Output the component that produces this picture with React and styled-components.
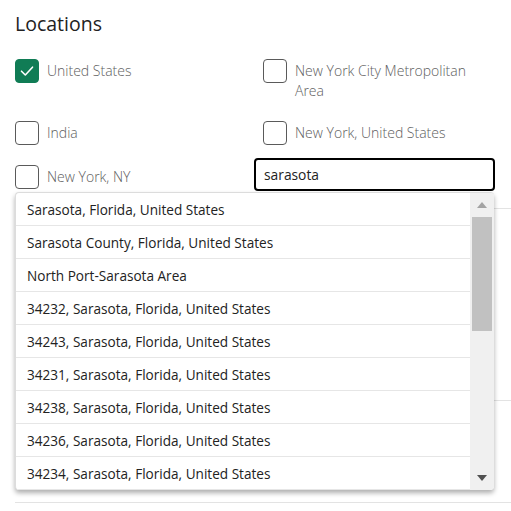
import React from "react";
import styled, { createGlobalStyle } from "styled-components";

const GlobalStyle = createGlobalStyle`
  html, body {
    margin: 0;
    padding: 0;
    background: #ffffff;
    overflow: hidden;
  }
  body {
    font-family: "Open Sans", "Noto Sans", sans-serif;
    color: #222;
  }
  * { box-sizing: border-box; }
`;

const Page = styled.div`
  width: 511px;
  height: 511px;
  padding-left: 15px;
  position: relative;
`;

const Title = styled.h2`
  margin: 0;
  padding-top: 10px;
  font-size: 19.5px;
  font-weight: 400;
  line-height: 28px;
  color: #222;
`;

const Grid = styled.div`
  position: relative;
  display: grid;
  grid-template-columns: 248px 232px;
  row-gap: 20px;
  margin-top: 21px;
  padding-right: 16px;
  align-items: start;
`;

const Option = styled.label`
  display: flex;
  align-items: flex-start;
  gap: 8px;
  font-size: 14px;
  font-weight: 300;
  line-height: 20px;
  color: #5e5e5e;
`;

const Box = styled.span`
  flex: none;
  width: 24px;
  height: 24px;
  border-radius: 4px;
  border: 1px solid ${(p) => (p.$checked ? "#107c55" : "#5a5a5a")};
  background: ${(p) => (p.$checked ? "#107c55" : "#fff")};
  display: flex;
  align-items: center;
  justify-content: center;
`;

const OptionText = styled.span`
  padding-top: 2px;
`;

const SearchInput = styled.input`
  margin: -7px 0 0 -9px;
  width: calc(100% + 9px);
  height: 33px;
  border: 2px solid #000;
  border-radius: 4px;
  padding: 0 8px;
  font: inherit;
  font-size: 13.8px;
  color: #222;
  outline: none;
  background: #fff;
`;

const Dropdown = styled.div`
  position: absolute;
  left: 0;
  top: 133px;
  width: 479px;
  height: 298px;
  display: flex;
  background: #fff;
  border: 1px solid #dcdcdc;
  border-right: none;
  border-bottom: none;
  border-radius: 4px;
  box-shadow: 0 3px 5px rgba(0, 0, 0, 0.32);
  overflow: hidden;
  z-index: 2;
`;

const List = styled.ul`
  list-style: none;
  margin: 0;
  padding: 0;
  flex: 1;
`;

const Item = styled.li`
  height: 33px;
  padding: 0 11px;
  display: flex;
  align-items: center;
  border-bottom: 1px solid #e6e6e6;
  font-size: 13.6px;
  color: #222;
  white-space: nowrap;
`;

const Scrollbar = styled.div`
  flex: none;
  width: 24px;
  background: #f0f0f0;
  display: flex;
  flex-direction: column;
  align-items: center;
`;

const ArrowButton = styled.div`
  height: 24px;
  width: 100%;
  display: flex;
  align-items: center;
  justify-content: center;
`;

const Thumb = styled.div`
  width: 20px;
  height: 114px;
  background: #c1c1c1;
`;

const Track = styled.div`
  flex: 1;
`;

const Divider = styled.div`
  height: 1px;
  background: #e3e3e3;
  margin-top: ${(p) => p.$gap}px;
`;

const Check = () => (
  <svg width="16" height="16" viewBox="0 0 16 16" fill="none">
    <path d="M2.5 8.2 L6.3 12 L13.5 4.2" stroke="#fff" strokeWidth="1.6" strokeLinecap="round" strokeLinejoin="round" />
  </svg>
);

const Triangle = ({ down, color }) => (
  <svg width="10" height="6" viewBox="0 0 10 6">
    <path d={down ? "M0 0 H10 L5 6 Z" : "M0 6 H10 L5 0 Z"} fill={color} />
  </svg>
);

const CheckOption = ({ checked, children }) => (
  <Option>
    <Box $checked={checked}>{checked && <Check />}</Box>
    <OptionText>{children}</OptionText>
  </Option>
);

const results = [
  "Sarasota, Florida, United States",
  "Sarasota County, Florida, United States",
  "North Port-Sarasota Area",
  "34232, Sarasota, Florida, United States",
  "34243, Sarasota, Florida, United States",
  "34231, Sarasota, Florida, United States",
  "34238, Sarasota, Florida, United States",
  "34236, Sarasota, Florida, United States",
  "34234, Sarasota, Florida, United States",
];

export default function App() {
  return (
    <>
      <GlobalStyle />
      <Page>
        <Title>Locations</Title>
        <Grid>
          <CheckOption checked>United States</CheckOption>
          <CheckOption>New York City Metropolitan Area</CheckOption>
          <CheckOption>India</CheckOption>
          <CheckOption>New York, United States</CheckOption>
          <CheckOption>New York, NY</CheckOption>
          <SearchInput defaultValue="sarasota" />
          <Dropdown>
            <List>
              {results.map((r) => (
                <Item key={r}>{r}</Item>
              ))}
            </List>
            <Scrollbar>
              <ArrowButton>
                <Triangle color="#a3a3a3" />
              </ArrowButton>
              <Thumb />
              <Track />
              <ArrowButton>
                <Triangle down color="#505050" />
              </ArrowButton>
            </Scrollbar>
          </Dropdown>
        </Grid>
        <Divider $gap={17} />
        <Divider $gap={191} />
        <Divider $gap={101} />
      </Page>
    </>
  );
}
